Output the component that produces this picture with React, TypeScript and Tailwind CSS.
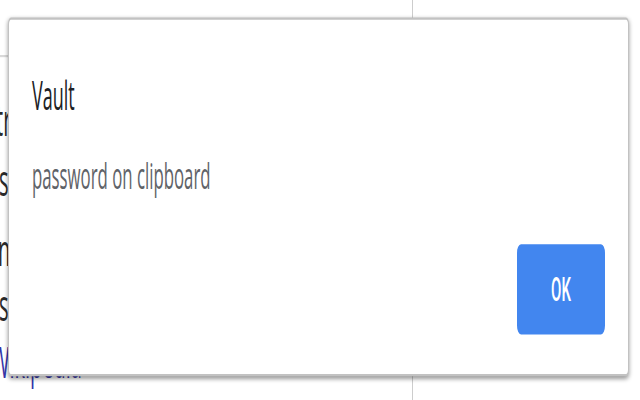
export default function App() {
  return (
    <div className="relative h-[400px] w-[640px] overflow-hidden bg-white font-['Open_Sans',sans-serif]">
      {/* whole capture is stretched vertically */}
      <div className="relative h-[182px] w-[640px] origin-top-left scale-y-[2.2]">
        {/* page behind the alert */}
        <div className="flex h-full">
          <div className="flex w-[412px] flex-col">
            <div className="h-[26px] shrink-0 border-b border-[#d9d9d9]" />
            <div className="flex flex-col whitespace-nowrap text-[20px] leading-[20px] text-[#2a2a2a]">
              <div className="mt-[19px] ml-[-4px]">tr</div>
              <div className="mt-[7px] ml-[-1px]">s</div>
              <div className="mt-[12px] ml-[-2px]">nd</div>
              <div className="mt-[5px] ml-[-1px]">s</div>
              <div className="mt-[6px] ml-[-9px] text-[#3434a8]">Wikipedia</div>
            </div>
          </div>
          <div className="w-px bg-[#cdcdcd]" />
        </div>

        {/* alert dialog */}
        <div
          role="dialog"
          aria-modal="true"
          className="absolute left-[8px] top-[7.7px] flex w-[621px] flex-col rounded-[3px] border border-[#c2c2c2] bg-white pt-[25px] pr-[23px] pb-[18px] pl-[23px] shadow-[0_1px_3px_rgba(0,0,0,0.4)]"
        >
          <h2 className="text-[18px] leading-[18px] font-normal text-[#202124]">Vault</h2>
          <p className="mt-[20.2px] text-[16.8px] leading-[16.8px] text-[#5f6368]">
            password on clipboard
          </p>
          <div className="mt-[22.6px] flex justify-end">
            <button
              type="button"
              className="h-[41px] w-[88px] rounded-[4px] bg-[#4286ef] font-['Roboto',sans-serif] text-[15px] font-medium text-white"
            >
              OK
            </button>
          </div>
        </div>
      </div>
    </div>
  );
}
